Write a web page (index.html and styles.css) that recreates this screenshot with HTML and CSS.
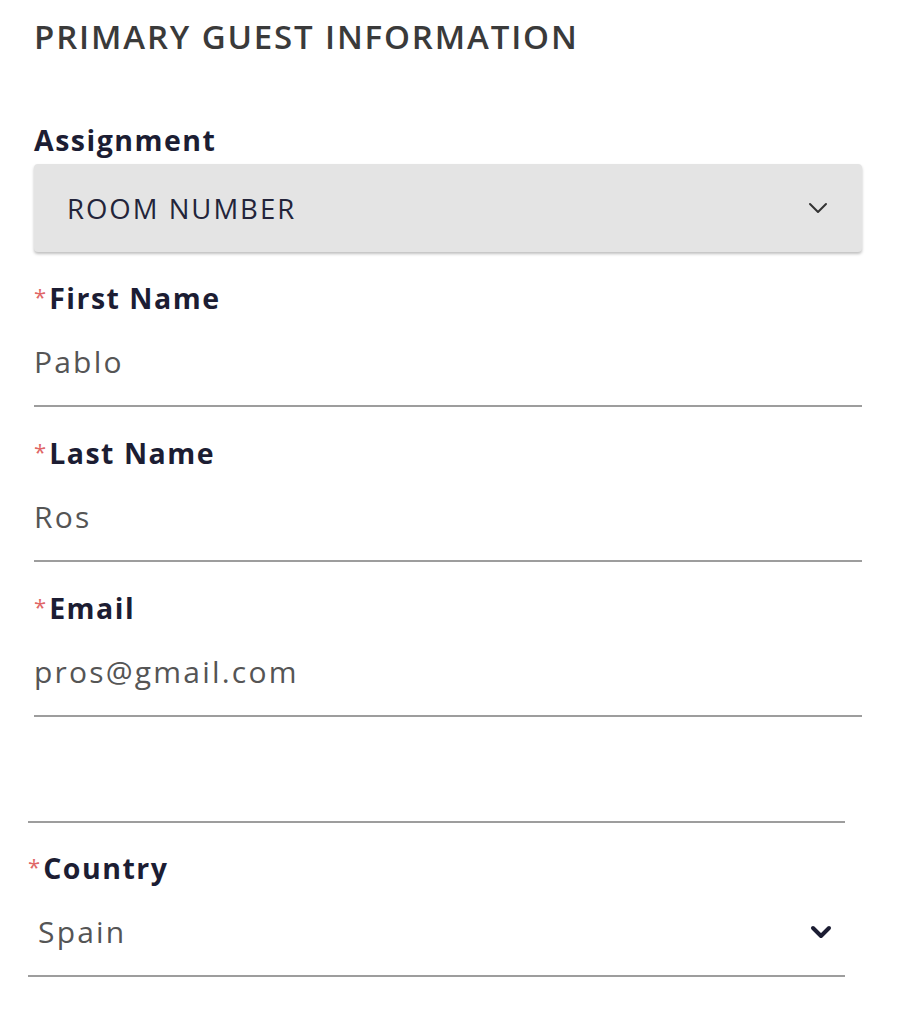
FILE: index.html
```html
<!DOCTYPE html>
<html lang="en">
<head>
    <meta charset="UTF-8">
    <meta name="viewport" content="width=device-width, initial-scale=1.0">
    <title>Primary Guest Information</title>
    <link rel="stylesheet" href="styles.css">
</head>
<body>
    <div class="guest-form">
        <h2 class="section-title">PRIMARY GUEST INFORMATION</h2>

        <div class="field">
            <label class="field-label">Assignment</label>
            <div class="select-box">
                <span>ROOM NUMBER</span>
                <svg class="chevron-thin" width="20" height="12" viewBox="0 0 20 12">
                    <path d="M2 2 L10 10 L18 2" fill="none" stroke="#333" stroke-width="2" stroke-linecap="round" stroke-linejoin="round"/>
                </svg>
            </div>
        </div>

        <div class="field">
            <label class="field-label"><span class="req">*</span>First Name</label>
            <div class="field-input">Pablo</div>
        </div>

        <div class="field">
            <label class="field-label"><span class="req">*</span>Last Name</label>
            <div class="field-input">Ros</div>
        </div>

        <div class="field">
            <label class="field-label"><span class="req">*</span>Email</label>
            <div class="field-input">pros@gmail.com</div>
        </div>
    </div>

    <!-- bloque de país -->
    <div class="country-form">
        <div class="empty-field"></div>

        <div class="field">
            <label class="field-label"><span class="req">*</span>Country</label>
            <div class="field-input country-select">
                <span>Spain</span>
                <svg class="chevron-bold" width="22" height="14" viewBox="0 0 22 14">
                    <path d="M3 3 L11 11 L19 3" fill="none" stroke="#1c1d33" stroke-width="4" stroke-linecap="round" stroke-linejoin="round"/>
                </svg>
            </div>
        </div>
    </div>
</body>
</html>
```

FILE: styles.css
```css
body {
    margin: 0;
    background: #fff;
    font-family: 'Open Sans', 'Liberation Sans', sans-serif;
}

.guest-form {
    width: 828px;
    margin-left: 34px;
    padding-top: 17px;
}

.section-title {
    margin: 0 0 65px;
    font-size: 33px;
    line-height: 40px;
    font-weight: 600;
    color: #3a3a3a;
    letter-spacing: 1.85px;
}

.field {
    margin-bottom: 28px;
}

.field-label {
    display: block;
    height: 36px;
    font-size: 28.5px;
    line-height: 36px;
    font-weight: 700;
    color: #1c1d33;
    letter-spacing: 1.5px;
}

.req {
    position: relative;
    top: -4px;
    padding-right: 3px;
    color: #e06666;
    font-weight: 400;
    font-size: 22px;
    letter-spacing: 0;
}

.select-box {
    margin-top: 6px;
    height: 88px;
    box-sizing: border-box;
    padding: 0 34px 0 33px;
    background: #e4e4e4;
    border-radius: 4px;
    box-shadow: 0 2px 3px rgba(0, 0, 0, 0.25);
    display: flex;
    align-items: center;
    justify-content: space-between;
    font-size: 27.5px;
    font-weight: 500;
    color: #23243a;
    letter-spacing: 2px;
}

.field-input {
    height: 36px;
    padding: 28px 0 25px;
    line-height: 36px;
    font-size: 30px;
    color: #555;
    letter-spacing: 2.2px;
    border-bottom: 2px solid #9d9d9d;
}

.country-form {
    width: 817px;
    margin-left: 28px;
}

.empty-field {
    height: 76px;
    border-bottom: 2px solid #9d9d9d;
    margin-bottom: 27px;
}

.country-select {
    display: flex;
    align-items: center;
    justify-content: space-between;
    padding-left: 10px;
    padding-right: 13px;
}
```
